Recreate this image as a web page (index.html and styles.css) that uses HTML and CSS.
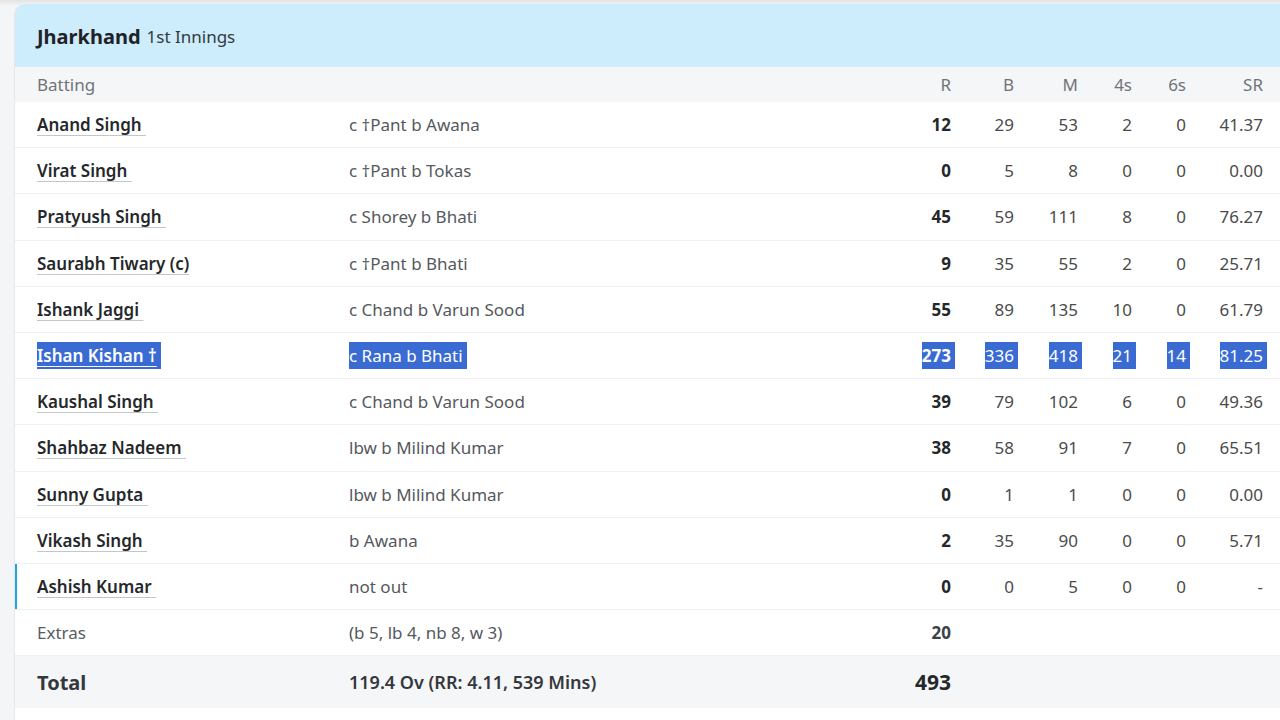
FILE: index.html
```html
<!DOCTYPE html>
<html>
<head>
<meta charset="utf-8">
<link rel="stylesheet" href="styles.css">
</head>
<body>
<div class="card">
  <div class="card-head"><span class="team">Jharkhand</span> <span class="inn">1st Innings</span></div>
  <div class="row head">
    <div>Batting</div><div></div>
    <div class="num">R</div><div class="num">B</div><div class="num">M</div><div class="num">4s</div><div class="num">6s</div><div class="num">SR</div>
  </div>
  <div class="row"><div><a class="pl">Anand Singh&nbsp;</a></div><div class="dis">c †Pant b Awana</div><div class="num r">12</div><div class="num">29</div><div class="num">53</div><div class="num">2</div><div class="num">0</div><div class="num">41.37</div></div>
  <div class="row"><div><a class="pl">Virat Singh&nbsp;</a></div><div class="dis">c †Pant b Tokas</div><div class="num r">0</div><div class="num">5</div><div class="num">8</div><div class="num">0</div><div class="num">0</div><div class="num">0.00</div></div>
  <div class="row"><div><a class="pl">Pratyush Singh&nbsp;</a></div><div class="dis">c Shorey b Bhati</div><div class="num r">45</div><div class="num">59</div><div class="num">111</div><div class="num">8</div><div class="num">0</div><div class="num">76.27</div></div>
  <div class="row"><div><a class="pl">Saurabh Tiwary (c)</a></div><div class="dis">c †Pant b Bhati</div><div class="num r">9</div><div class="num">35</div><div class="num">55</div><div class="num">2</div><div class="num">0</div><div class="num">25.71</div></div>
  <div class="row"><div><a class="pl">Ishank Jaggi&nbsp;</a></div><div class="dis">c Chand b Varun Sood</div><div class="num r">55</div><div class="num">89</div><div class="num">135</div><div class="num">10</div><div class="num">0</div><div class="num">61.79</div></div>
  <div class="row sel"><div><span class="hl"><a class="pl">Ishan Kishan †</a></span></div><div class="dis"><span class="hl">c Rana b Bhati</span></div><div class="num r"><span class="hl">273</span></div><div class="num"><span class="hl">336</span></div><div class="num"><span class="hl">418</span></div><div class="num"><span class="hl">21</span></div><div class="num"><span class="hl">14</span></div><div class="num"><span class="hl">81.25</span></div></div>
  <div class="row"><div><a class="pl">Kaushal Singh&nbsp;</a></div><div class="dis">c Chand b Varun Sood</div><div class="num r">39</div><div class="num">79</div><div class="num">102</div><div class="num">6</div><div class="num">0</div><div class="num">49.36</div></div>
  <div class="row"><div><a class="pl">Shahbaz Nadeem&nbsp;</a></div><div class="dis">lbw b Milind Kumar</div><div class="num r">38</div><div class="num">58</div><div class="num">91</div><div class="num">7</div><div class="num">0</div><div class="num">65.51</div></div>
  <div class="row"><div><a class="pl">Sunny Gupta&nbsp;</a></div><div class="dis">lbw b Milind Kumar</div><div class="num r">0</div><div class="num">1</div><div class="num">1</div><div class="num">0</div><div class="num">0</div><div class="num">0.00</div></div>
  <div class="row"><div><a class="pl">Vikash Singh&nbsp;</a></div><div class="dis">b Awana</div><div class="num r">2</div><div class="num">35</div><div class="num">90</div><div class="num">0</div><div class="num">0</div><div class="num">5.71</div></div>
  <div class="row batting"><div><a class="pl">Ashish Kumar&nbsp;</a></div><div class="dis">not out</div><div class="num r">0</div><div class="num">0</div><div class="num">5</div><div class="num">0</div><div class="num">0</div><div class="num">-</div></div>
  <div class="row extras"><div>Extras</div><div class="dis">(b 5, lb 4, nb 8, w 3)</div><div class="num r">20</div><div></div><div></div><div></div><div></div><div></div></div>
  <div class="row total"><div class="tl">Total</div><div class="tdet">119.4 Ov (RR: 4.11, 539 Mins)</div><div class="num tr">493</div><div></div><div></div><div></div><div></div><div></div></div>
  <div class="tail"></div>
</div>
</body>
</html>
```
FILE: styles.css
```css
html, body {
  margin: 0;
  padding: 0;
}
body {
  background: #f4f5f7;
  font-family: "Noto Sans", "Open Sans", sans-serif;
  font-size: 17px;
  color: #4b4b4b;
  width: 1280px;
  height: 720px;
  overflow: hidden;
  padding-top: 4px;
  box-sizing: border-box;
  background-image: linear-gradient(#e4e4e4, #f4f5f7 6px);
}
.card {
  margin-left: 14px;
  background: #fff;
  border-left: 1px solid #e6e8eb;
  border-top-left-radius: 10px;
  overflow: hidden;
}
.card-head {
  background: #cdecfc;
  height: 63px;
  display: flex;
  align-items: center;
  padding: 2px 0 0 22px;
  box-sizing: border-box;
  gap: 6px;
}
.team {
  font-weight: 700;
  font-size: 20px;
  color: #1f2328;
}
.inn {
  font-size: 17px;
  color: #333a40;
}
.row {
  display: grid;
  grid-template-columns: 312px 1fr 64px 63px 64px 54px 54px 77px;
  align-items: center;
  height: 46.2px;
  padding: 0 17px 0 22px;
  border-bottom: 1px solid #eef0f2;
  box-sizing: border-box;
  position: relative;
}
.row.head {
  height: 35px;
  background: #f5f6f8;
  color: #707478;
  border-bottom: none;
}
.num {
  text-align: right;
}
.pl {
  font-weight: 600;
  color: #25282b;
  text-decoration: underline;
  text-decoration-color: #c3c6ca;
  text-decoration-thickness: 1px;
  text-underline-offset: 4px;
}
.dis {
  color: #55595d;
}
.r {
  font-weight: 700;
  color: #25282b;
}
.hl {
  background: #3a6bd3;
  color: #fff;
  padding: 2px 4px 2px 0;
}
.num .hl {
  margin-right: -4px;
}
.sel .pl {
  color: #fff;
  text-decoration-color: #fff;
}
.sel .r .hl {
  font-weight: 700;
}
.batting::before {
  content: "";
  position: absolute;
  left: -1px;
  top: 0;
  bottom: 0;
  width: 3px;
  background: #19a7e6;
}
.extras {
  color: #585c60;
}
.extras .r {
  font-weight: 700;
  color: #3d4145;
}
.total {
  height: 52px;
  background: #f5f6f8;
  border-bottom: none;
}
.tl {
  font-weight: 700;
  font-size: 20px;
  color: #34383c;
}
.tdet {
  font-weight: 600;
  font-size: 18px;
  color: #34383c;
}
.tr {
  font-weight: 700;
  font-size: 21px;
  color: #25282b;
}
.tail {
  height: 20px;
  background: #fff;
}
```
